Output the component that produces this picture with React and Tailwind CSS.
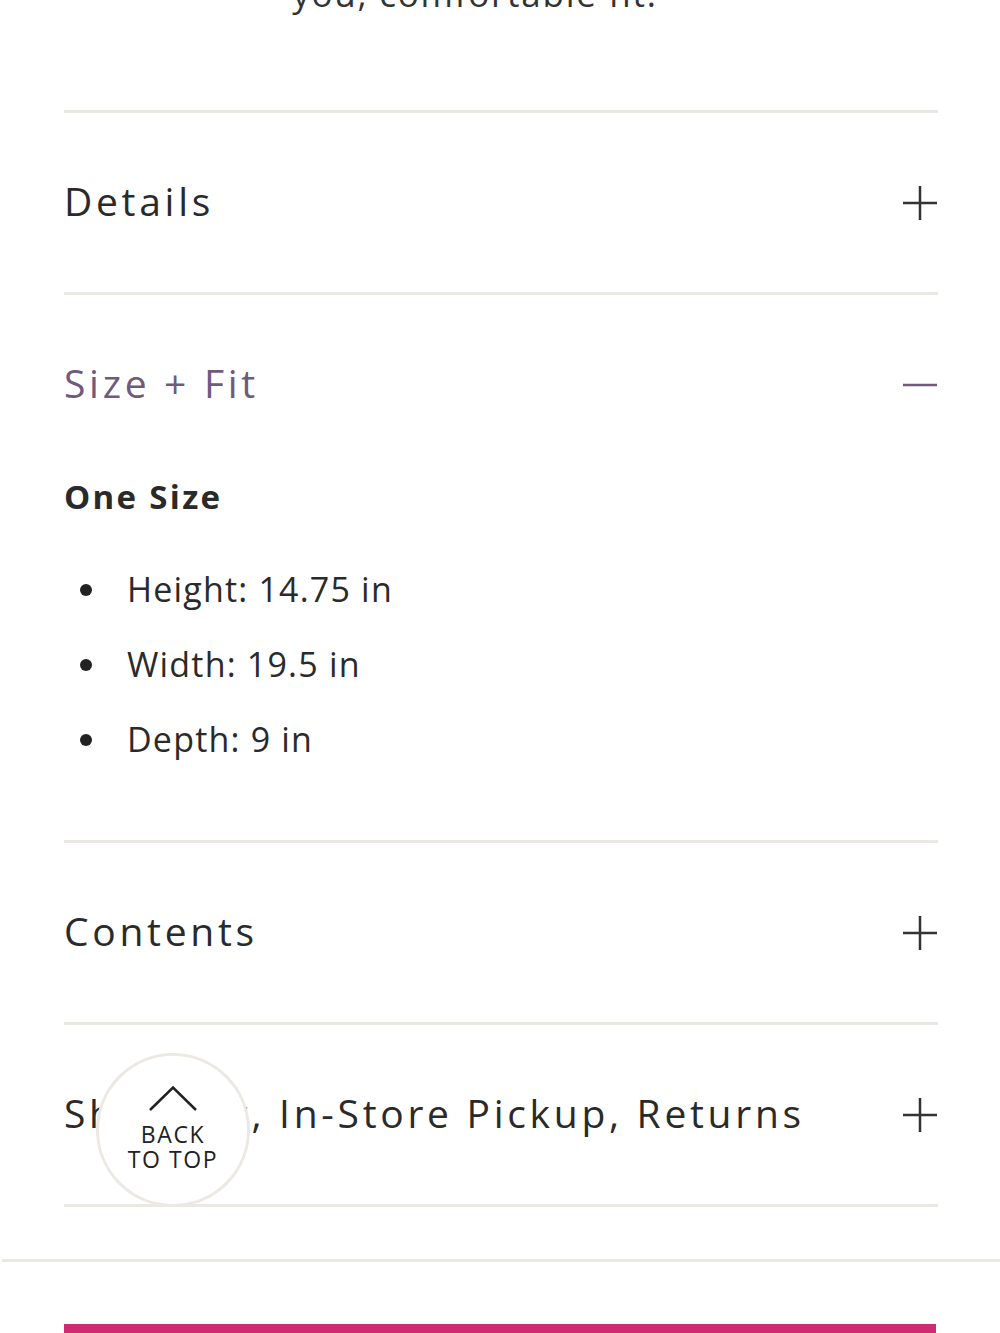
import React from "react";

const font = { fontFamily: '"Open Sans", "Noto Sans", sans-serif' };

function Plus() {
  return (
    <svg width="36" height="36" viewBox="0 0 36 36" className="shrink-0">
      <path d="M18 1V35M1 18H35" stroke="#333" strokeWidth="2.5" fill="none" />
    </svg>
  );
}

function Minus() {
  return (
    <svg width="36" height="36" viewBox="0 0 36 36" className="shrink-0">
      <path d="M1 18H35" stroke="#6f5a7e" strokeWidth="2.5" fill="none" />
    </svg>
  );
}

function Row({ title, open, children }) {
  return (
    <div className="border-t-[3px] border-[#ebe8e4]">
      <div className="h-[179px] pb-[4px] flex items-center justify-between">
        <span
          className={`text-[39px] leading-[50px] tracking-[0.095em] ${open ? "text-[#6f5a7e]" : "text-[#2a2a2a]"}`}
        >
          {title}
        </span>
        <span className="pt-[4px]">{open ? <Minus /> : <Plus />}</span>
      </div>
      {children}
    </div>
  );
}

export default function App() {
  return (
    <div className="relative w-[1000px] h-[1333px] bg-white overflow-hidden text-[#2a2a2a]" style={font}>
      <div className="h-[110px] relative">
        <p className="absolute left-0 right-0 -top-[31px] pr-[50px] text-center text-[35px] tracking-[0.05em] leading-[50px] text-[#333]">
          you, comfortable fit.
        </p>
      </div>
      <div className="ml-[64px] w-[874px]">
        <Row title="Details" />
        <Row title="Size + Fit" open>
          <div className="pb-[63px]">
            <div className="text-[33px] font-bold tracking-[0.07em] leading-[44px] mt-[1px]">One Size</div>
            <ul className="mt-[33px]">
              {["Height: 14.75 in", "Width: 19.5 in", "Depth: 9 in"].map((t) => (
                <li key={t} className="h-[75px] flex items-center text-[34px] tracking-[0.035em]">
                  <span className="w-[12px] h-[12px] rounded-full bg-[#222] ml-[16px] mr-[35px]" />
                  {t}
                </li>
              ))}
            </ul>
          </div>
        </Row>
        <Row title="Contents" />
        <Row title="Shipping, In-Store Pickup, Returns" />
        <div className="border-t-[3px] border-[#ebe8e4]" />
      </div>
      <div className="mt-[52px] border-t-[3px] border-[#ebe8e4] ml-[2px]" />
      <div className="mx-[64px] mt-[62px] h-[20px] bg-[#d02a73]" />

      <button
        className="absolute left-[96px] top-[1053px] w-[154px] h-[154px] rounded-full bg-white border-[3px] border-[#ece8e3] flex flex-col items-center justify-start pt-[30px]"
      >
        <svg width="48" height="25" viewBox="0 0 48 25">
          <path d="M1 24L24 1.5L47 24" stroke="#222" strokeWidth="2.5" fill="none" />
        </svg>
        <span className="text-[23px] leading-[25px] tracking-[0.07em] text-[#222] mt-[11px]">BACK</span>
        <span className="text-[23px] leading-[25px] tracking-[0.07em] text-[#222]">TO TOP</span>
      </button>
    </div>
  );
}
